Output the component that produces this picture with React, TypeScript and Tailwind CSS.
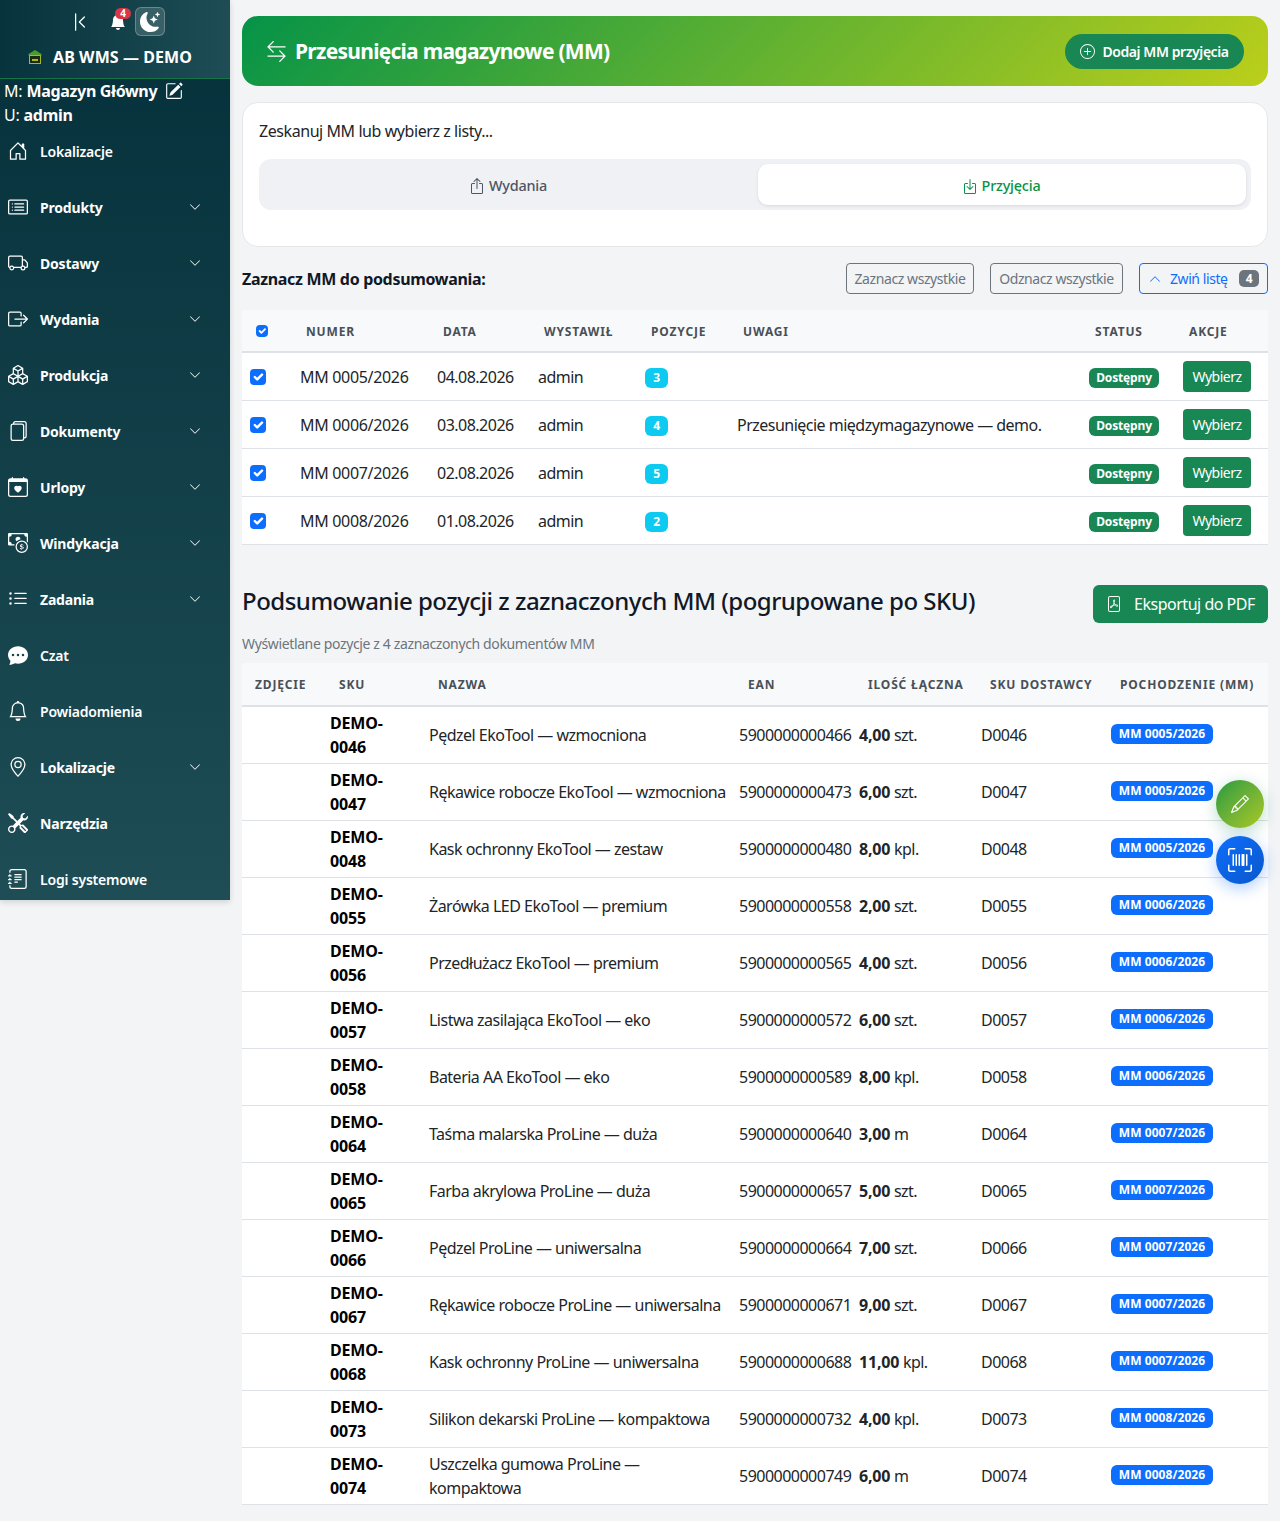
import React from "react";
import {
  BsArrowLeftRight,
  BsBell,
  BsBellFill,
  BsBoxArrowInDown,
  BsBoxArrowRight,
  BsBoxArrowUp,
  BsBoxes,
  BsCalendarHeart,
  BsCardList,
  BsCashCoin,
  BsChatDotsFill,
  BsChevronBarLeft,
  BsChevronDown,
  BsChevronUp,
  BsFilePdf,
  BsFiles,
  BsGeoAlt,
  BsHouseDoor,
  BsJournalText,
  BsListUl,
  BsMoonStarsFill,
  BsPencil,
  BsPencilSquare,
  BsPlusCircle,
  BsTools,
  BsTruck,
  BsUpcScan,
} from "react-icons/bs";

const navItems = [
  { label: "Lokalizacje", icon: BsHouseDoor, arrow: false, light: true },
  { label: "Produkty", icon: BsCardList, arrow: true },
  { label: "Dostawy", icon: BsTruck, arrow: true },
  { label: "Wydania", icon: BsBoxArrowRight, arrow: true },
  { label: "Produkcja", icon: BsBoxes, arrow: true },
  { label: "Dokumenty", icon: BsFiles, arrow: true },
  { label: "Urlopy", icon: BsCalendarHeart, arrow: true },
  { label: "Windykacja", icon: BsCashCoin, arrow: true },
  { label: "Zadania", icon: BsListUl, arrow: true },
  { label: "Czat", icon: BsChatDotsFill, arrow: false, light: true },
  { label: "Powiadomienia", icon: BsBell, arrow: false, light: true },
  { label: "Lokalizacje", icon: BsGeoAlt, arrow: true },
  { label: "Narzędzia", icon: BsTools, arrow: false },
  { label: "Logi systemowe", icon: BsJournalText, arrow: false, light: true },
];

const documents = [
  { number: "MM 0005/2026", date: "04.08.2026", count: 3, note: "" },
  { number: "MM 0006/2026", date: "03.08.2026", count: 4, note: "Przesunięcie międzymagazynowe — demo." },
  { number: "MM 0007/2026", date: "02.08.2026", count: 5, note: "" },
  { number: "MM 0008/2026", date: "01.08.2026", count: 2, note: "" },
];

const items = [
  ["0046", "Pędzel EkoTool — wzmocniona", "5900000000466", "4,00", "szt.", "MM 0005/2026"],
  ["0047", "Rękawice robocze EkoTool — wzmocniona", "5900000000473", "6,00", "szt.", "MM 0005/2026"],
  ["0048", "Kask ochronny EkoTool — zestaw", "5900000000480", "8,00", "kpl.", "MM 0005/2026"],
  ["0055", "Żarówka LED EkoTool — premium", "5900000000558", "2,00", "szt.", "MM 0006/2026"],
  ["0056", "Przedłużacz EkoTool — premium", "5900000000565", "4,00", "szt.", "MM 0006/2026"],
  ["0057", "Listwa zasilająca EkoTool — eko", "5900000000572", "6,00", "szt.", "MM 0006/2026"],
  ["0058", "Bateria AA EkoTool — eko", "5900000000589", "8,00", "kpl.", "MM 0006/2026"],
  ["0064", "Taśma malarska ProLine — duża", "5900000000640", "3,00", "m", "MM 0007/2026"],
  ["0065", "Farba akrylowa ProLine — duża", "5900000000657", "5,00", "szt.", "MM 0007/2026"],
  ["0066", "Pędzel ProLine — uniwersalna", "5900000000664", "7,00", "szt.", "MM 0007/2026"],
  ["0067", "Rękawice robocze ProLine — uniwersalna", "5900000000671", "9,00", "szt.", "MM 0007/2026"],
  ["0068", "Kask ochronny ProLine — uniwersalna", "5900000000688", "11,00", "kpl.", "MM 0007/2026"],
  ["0073", "Silikon dekarski ProLine — kompaktowa", "5900000000732", "4,00", "kpl.", "MM 0008/2026"],
  ["0074", "Uszczelka gumowa ProLine — kompaktowa", "5900000000749", "6,00", "m", "MM 0008/2026"],
];

function Checkbox({ small }: { small?: boolean }) {
  return (
    <span className={`flex items-center justify-center rounded-[4px] bg-[#0d6efd] ${small ? "-mt-[2px] h-3 w-3" : "h-4 w-4"}`}>
      <svg viewBox="0 0 20 20" className={small ? "h-3 w-3" : "h-4 w-4"} fill="none" stroke="#fff" strokeWidth="3" strokeLinecap="round" strokeLinejoin="round">
        <path d="m6 10 3 3 6-6" />
      </svg>
    </span>
  );
}

function Sidebar() {
  return (
    <aside className="h-[900px] w-[230px] shrink-0 bg-gradient-to-b from-[#04303a] to-[#1e4d55] text-white shadow-[0_2px_6px_rgba(0,0,0,0.15)]">
      {/* Brand header */}
      <div className="h-[79px] border-b border-[#157347] bg-gradient-to-r from-[#07343c] to-[#1e4d55]">
        <div className="flex h-[43px] items-center pl-[70px]">
          <BsChevronBarLeft className="h-5 w-5" />
          <span className="relative ml-[20px]">
            <BsBellFill className="h-4 w-4" />
            <span className="absolute -right-[5px] -top-[6px] flex h-[11px] w-[16px] items-center justify-center rounded-full bg-[#dc3545] text-[10px] font-bold leading-none">4</span>
          </span>
          <span className="ml-[9px] flex h-[29px] w-[30px] items-center justify-center rounded-[6px] border border-white/25 bg-white/15">
            <BsMoonStarsFill className="h-[20px] w-[20px]" />
          </span>
        </div>
        <div className="mt-[2px] flex items-center pl-[27px]">
          <svg viewBox="0 0 16 16" className="h-4 w-4">
            <path d="M8 1 1.5 5v1.5h13V5z" fill="#4c9a2a" />
            <rect x="2.5" y="6.5" width="11" height="8" fill="#1c2b12" stroke="#a8b820" strokeWidth="1" />
            <rect x="5" y="10" width="6" height="2" fill="#a8b820" />
          </svg>
          <span className="ml-[10px] text-[16px] font-bold leading-6 tracking-[0.005em]">AB WMS — DEMO</span>
        </div>
      </div>

      {/* Warehouse and user */}
      <div className="pl-1 text-[16px] leading-6">
        <div className="flex items-center">
          M: <b className="ml-1 tracking-[-0.02em]">Magazyn Główny</b>
          <BsPencilSquare className="ml-[8px] h-[18px] w-[18px]" />
        </div>
        <div>
          U: <b className="tracking-[-0.02em]">admin</b>
        </div>
      </div>

      <nav className="-mt-[4px]">
        {navItems.map((item, i) => {
          const Icon = item.icon;
          return (
            <div key={i} className="flex h-14 items-center pl-2 pr-[29px]">
              <Icon className="h-5 w-5 shrink-0" />
              <span className={`ml-3 flex-1 text-[14px] ${item.light ? "font-semibold" : "font-bold"}`}>{item.label}</span>
              {item.arrow && <BsChevronDown className="h-3 w-3" />}
            </div>
          );
        })}
      </nav>
    </aside>
  );
}

function DocumentsTable() {
  const th = "h-[43px] border-b-2 border-[#dee2e6] bg-[#f8f9fa] px-[14px] pt-[2px] text-left text-[12px] font-bold uppercase tracking-[0.07em] text-[#495057]";
  const td = "h-12 border-b border-[#dee2e6] bg-white px-2 align-middle";
  return (
    <table className="w-full table-fixed border-separate border-spacing-0 text-[16px] tracking-[-0.032em] text-[#212529]">
      <colgroup>
        <col className="w-[50px]" />
        <col className="w-[137px]" />
        <col className="w-[101px]" />
        <col className="w-[107px]" />
        <col className="w-[92px]" />
        <col className="w-[352px]" />
        <col className="w-[94px]" />
        <col />
      </colgroup>
      <thead>
        <tr>
          <th className={th}><Checkbox small /></th>
          <th className={th}>Numer</th>
          <th className={th}>Data</th>
          <th className={th}>Wystawił</th>
          <th className={th}>Pozycje</th>
          <th className={th}>Uwagi</th>
          <th className={th}>Status</th>
          <th className={th}>Akcje</th>
        </tr>
      </thead>
      <tbody>
        {documents.map((doc) => (
          <tr key={doc.number}>
            <td className={td}><Checkbox /></td>
            <td className={td + " tracking-[-0.02em]"}>{doc.number}</td>
            <td className={td}>{doc.date}</td>
            <td className={td}>admin</td>
            <td className={td}>
              <span className="mt-[3px] flex h-5 w-[23px] items-center justify-center rounded-[6px] bg-[#0dcaf0] text-[12px] font-bold text-white">{doc.count}</span>
            </td>
            <td className={td + " whitespace-nowrap"}>{doc.note}</td>
            <td className={td}>
              <span className="mt-[3px] flex h-5 w-[70px] items-center justify-center rounded-[6px] bg-[#198754] text-[12px] font-bold tracking-[-0.012em] text-white">Dostępny</span>
            </td>
            <td className={td}>
              <button className="h-[31px] w-[68px] rounded-[4px] bg-[#198754] text-[14px] text-white">Wybierz</button>
            </td>
          </tr>
        ))}
      </tbody>
    </table>
  );
}

function SummaryTable() {
  const th = "h-[44px] whitespace-nowrap border-b-2 border-[#dee2e6] bg-[#f8f9fa] px-[17px] pt-[2px] text-left text-[12px] font-bold uppercase tracking-[0.07em] text-[#495057] first:px-[13px]";
  const td = "h-[57px] border-b border-[#dee2e6] bg-white px-2 align-middle";
  return (
    <table className="w-full table-fixed border-separate border-spacing-0 text-[16px] tracking-[-0.032em] text-[#212529]">
      <colgroup>
        <col className="w-[80px]" />
        <col className="w-[99px]" />
        <col className="w-[310px]" />
        <col className="w-[120px]" />
        <col className="w-[122px]" />
        <col className="w-[130px]" />
        <col />
      </colgroup>
      <thead>
        <tr>
          <th className={th}>Zdjęcie</th>
          <th className={th}>SKU</th>
          <th className={th}>Nazwa</th>
          <th className={th}>EAN</th>
          <th className={th}>Ilość łączna</th>
          <th className={th}>SKU dostawcy</th>
          <th className={th}>Pochodzenie (MM)</th>
        </tr>
      </thead>
      <tbody>
        {items.map(([code, name, ean, qty, unit, source]) => (
          <tr key={code}>
            <td className={td}></td>
            <td className={td + " font-bold tracking-[-0.012em] text-black"}>DEMO-{code}</td>
            <td className={td + (code === "0074" ? "" : " whitespace-nowrap")}>{name}</td>
            <td className={td}>{ean}</td>
            <td className={td}>
              <b className="tracking-[-0.012em]">{qty}</b> {unit}
            </td>
            <td className={td}>D{code}</td>
            <td className={td + " pb-[2px] pt-0"}>
              <span className="flex h-5 w-[102px] items-center justify-center rounded-[6px] bg-[#0d6efd] text-[12px] font-bold tracking-[0.005em] text-white">{source}</span>
            </td>
          </tr>
        ))}
      </tbody>
    </table>
  );
}

export default function App() {
  return (
    <div className="relative flex min-h-screen bg-[#f3f4f6] font-['Noto_Sans',sans-serif] tracking-[-0.012em]">
      <Sidebar />

      <main className="min-w-0 flex-1 px-3 pb-4 pt-4">
        {/* Page header */}
        <div className="flex h-[70px] items-center justify-between rounded-[16px] bg-[linear-gradient(135deg,#059348,#bccf1a)] pl-6 pr-6 text-white">
          <h1 className="flex items-center pt-[1px] text-[21px] font-bold tracking-[-0.034em]">
            <BsArrowLeftRight className="mr-2 h-[21px] w-[21px]" />
            Przesunięcia magazynowe (MM)
          </h1>
          <button className="flex h-[35px] w-[179px] items-center justify-center rounded-full bg-[#198754] text-[14px] font-semibold tracking-[-0.03em]">
            <BsPlusCircle className="mr-[7px] h-[15px] w-[15px]" />
            Dodaj MM przyjęcia
          </button>
        </div>

        {/* Scan card */}
        <div className="mt-4 rounded-[16px] border border-[#e5e7eb] bg-white px-4 pb-5 pt-4">
          <p className="mb-4 text-[16px] leading-6 tracking-[-0.027em] text-[#212529]">Zeskanuj MM lub wybierz z listy...</p>
          <div className="mb-4 flex h-[51px] rounded-[12px] bg-[#f0f1f4] p-[5px]">
            <div className="flex flex-1 items-center justify-center pr-[6px] pt-[2px] text-[14.4px] font-medium text-[#4b5563]">
              <BsBoxArrowUp className="mr-1 h-4 w-4" /> Wydania
            </div>
            <div className="flex w-[488px] items-center justify-center rounded-[10px] bg-white pr-[2px] pt-[2px] text-[14.4px] font-medium text-[#059348] shadow-[0_1px_3px_rgba(0,0,0,0.1)]">
              <BsBoxArrowInDown className="mr-1 h-4 w-4" /> Przyjęcia
            </div>
          </div>
        </div>

        {/* Toolbar */}
        <div className="mb-4 mt-4 flex h-[31px] items-center justify-between">
          <h2 className="text-[16px] font-bold tracking-[-0.02em] text-[#111827]">Zaznacz MM do podsumowania:</h2>
          <div className="flex gap-4 text-[14px] tracking-[-0.03em]">
            <button className="h-[31px] w-[128px] rounded-[4px] border border-[#6c757d] text-[#6c757d]">Zaznacz wszystkie</button>
            <button className="h-[31px] w-[133px] rounded-[4px] border border-[#6c757d] text-[#6c757d]">Odznacz wszystkie</button>
            <button className="flex h-[31px] w-[129px] items-center rounded-[4px] border border-[#0d6efd] pl-[9px] text-[#0d6efd]">
              <BsChevronUp className="mr-[9px] h-3 w-3" />
              Zwiń listę
              <span className="ml-auto mr-2 flex h-[17px] w-5 items-center justify-center rounded-[5px] bg-[#6c757d] text-[12px] font-bold text-white">4</span>
            </button>
          </div>
        </div>

        <DocumentsTable />

        {/* Summary */}
        <div className="mt-10 flex h-[38px] items-center justify-between">
          <h2 className="pb-[6px] text-[24px] font-medium tracking-[-0.021em] text-[#111827]">Podsumowanie pozycji z zaznaczonych MM (pogrupowane po SKU)</h2>
          <button className="flex h-[38px] w-[175px] items-center rounded-[6px] bg-[#198754] pl-[13px] text-[16px] tracking-[-0.03em] text-white">
            <BsFilePdf className="mr-[12px] h-4 w-4" />
            Eksportuj do PDF
          </button>
        </div>
        <p className="mb-[9px] mt-[10px] text-[14px] leading-[21px] tracking-[-0.026em] text-[#6c757d]">Wyświetlane pozycje z 4 zaznaczonych dokumentów MM</p>

        <SummaryTable />
      </main>

      {/* Floating actions */}
      <button className="absolute left-[1216px] top-[780px] flex h-12 w-12 items-center justify-center rounded-full bg-gradient-to-br from-[#159a3f] to-[#a8c820] text-white shadow-[0_4px_16px_rgba(25,135,84,0.3)]">
        <BsPencil className="h-[18px] w-[18px]" />
      </button>
      <button className="absolute left-[1216px] top-[836px] flex h-12 w-12 items-center justify-center rounded-full bg-gradient-to-br from-[#0d6efd] to-[#0a58ca] text-white shadow-[0_4px_16px_rgba(13,110,253,0.35)]">
        <BsUpcScan className="h-[24px] w-[24px]" />
      </button>
    </div>
  );
}
